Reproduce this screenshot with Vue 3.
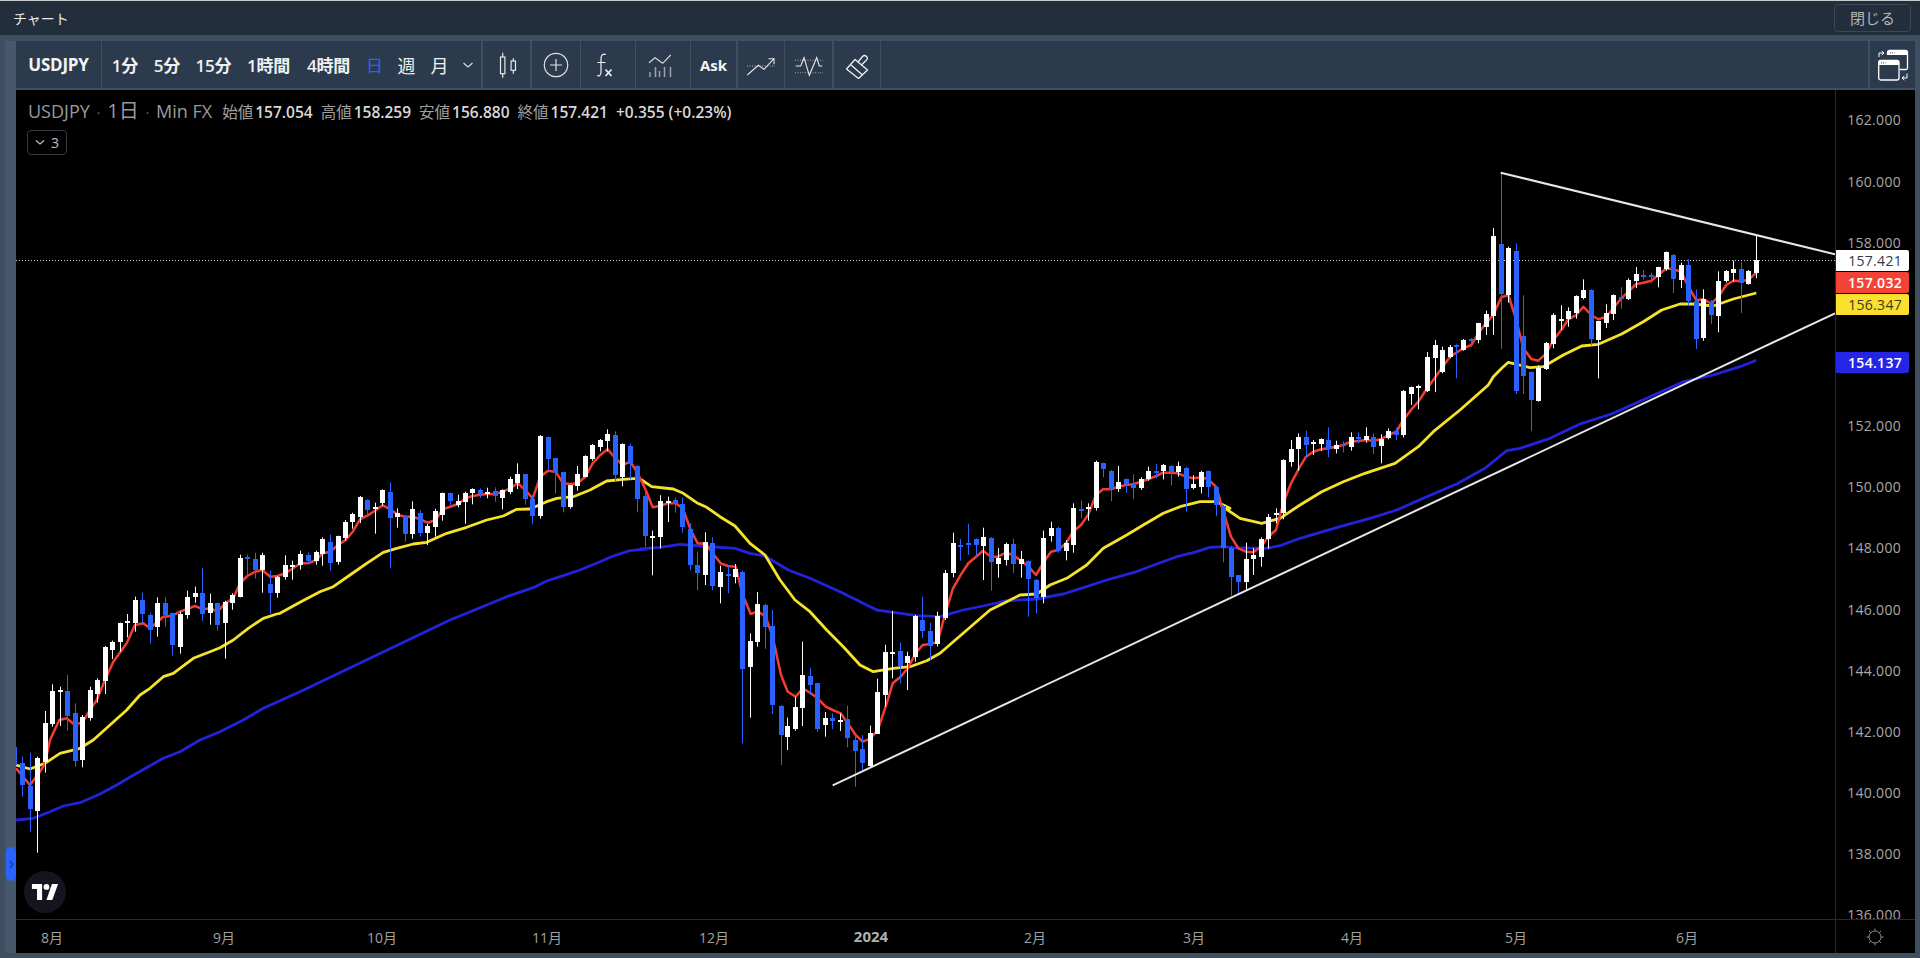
<script setup>
const sections = [
  [0, 720, '44 80 135 80 150 d;67 128 195 110 230 d;91 197 267 98 335 d;112 113 272 110 398 u'],
  [0, 540, '136 548 665 513 698 u;157 452 552 433 560 u;180 449 455 440 558 u;202 452 527 405 572 d;226 519 662 490 680 d;247 531 660 525 682 u;271 449 534 440 542 u;292 419 461 415 488 u;316 320 422 318 462 u;337 305 329 302 357 u;361 250 306 248 335 u;382 244 250 222 292 u;406 179 248 170 275 u;427 180 223 158 248 d;451 224 269 218 311 d;472 188 260 172 290 u;496 188 224 172 260 d;517 218 314 218 347 d;541 221 320 215 341 u;562 170 224 152 236 u;586 158 170 140 188 u;607 158 223 83 242 d;631 188 218 161 254 u;652 188 254 188 272 d;676 185 250 182 356 u;697 164 188 160 209 u;721 53 170 44 172 u;742 50 58 44 112 d;766 58 91 38 116 d;787 44 91 38 158 u;811 131 158 92 221 d;832 110 158 108 173 u;856 74 110 46 119 u;877 76 80 62 119 u'],
  [280, 420, '62 401 434 392 449 u;85 404 423 398 430 d;108 395 422 392 434 u;128 356 401 352 437 u;151 365 428 344 452 d;174 349 425 347 434 u;197 305 355 300 362 u;218 283 307 278 326 u;241 232 292 228 309 u;262 241 269 238 285 d;285 260 268 248 341 u;308 211 248 208 257 u;331 217 295 187 445 d;352 280 292 265 323 u;377 289 341 286 365 d;398 266 341 244 356 u;421 280 338 271 350 d;443 317 338 312 375 u;467 274 322 266 350 u;488 218 284 218 302 u;511 218 244 218 256 d;534 244 254 224 262 u;557 218 247 215 311 u;578 206 220 205 253 u;601 211 221 205 234 d;623 215 223 203 235 u;646 214 229 202 245 d;668 211 233 208 268 u;691 178 217 170 223 u;713 163 190 130 207 u;736 163 238 163 254 d;758 238 289 226 313 d;781 47 287 45 296 u;804 52 118 50 148 d;827 115 160 115 221 d;849 157 262 155 277 d;872 196 260 196 266 u;893 163 199 138 212 u;916 109 170 106 172 u;938 76 118 72 122 u;961 61 82 57 94 u;983 43 64 28 94 u;1006 46 165 34 183 d;1028 73 172 70 199 u;1051 79 133 70 178 d;1073 137 238 135 277 d;1097 227 348 203 380 d;1118 349 355 332 466 u'],
  [640, 420, '62 242 352 226 385 u;84 242 246 230 306 u;107 240 252 232 278 d;128 251 322 233 338 d;152 326 436 310 451 d;173 434 460 395 511 d;197 365 464 337 495 u;218 369 497 352 511 d;242 455 502 437 550 u;264 461 465 438 520 d;287 447 470 432 490 u;308 455 746 452 970 d;332 662 740 640 893 u;353 551 665 516 680 u;377 554 620 551 686 d;398 617 855 570 882 d;423 857 944 855 1035 d;443 917 950 893 990 u;467 860 926 830 932 u;488 765 863 665 918 u;512 768 795 743 824 d;533 789 926 789 935 d;557 893 914 876 950 u;578 894 902 880 927 d;602 899 905 880 933 u;623 897 953 857 982 d;647 960 992 945 1100 d;668 987 1028 945 1050 d;692 938 1038 917 1042 u;713 815 941 776 942 u;737 695 824 674 860 u;758 697 702 573 775 u;782 692 737 668 790 d;803 708 730 695 810 u;827 589 710 585 725 u;848 599 632 530 654 d;872 633 677 608 720 d;893 587 672 575 680 u'],
  [900, 440, '136 399 534 390 540 u;159 308 400 278 412 u;182 314 317 297 362 d;205 309 316 251 344 d;228 298 316 295 345 d;249 290 319 263 420 u;273 293 367 291 452 d;294 353 373 324 413 u;318 313 361 308 376 u;339 311 373 296 399 d;363 358 373 333 413 u;384 363 418 361 530 d;408 419 473 417 520 d;429 293 472 272 490 u;453 264 287 245 305 u;474 263 332 260 338 d;498 308 333 300 361 u;519 203 316 190 338 u;543 208 214 182 235 d;564 200 204 190 242 u;588 67 203 62 212 u;609 68 87 68 112 d;633 92 149 90 184 d;654 125 148 78 156 u;678 116 131 115 158 d;699 129 144 103 177 d;723 116 145 112 150 u;744 92 118 80 122 u;768 93 97 72 115 d;789 76 94 72 118 u;813 77 96 76 136 d;834 77 95 65 110 u;858 83 148 80 215 d;879 131 143 106 148 u;903 95 142 92 160 u;924 92 140 92 172 d;948 140 196 138 228 d;969 198 324 195 367 d;993 323 412 318 467 d;1015 405 425 405 465 d;1038 356 425 308 452 u;1060 344 358 324 405 u;1083 296 352 292 380 u;1105 230 298 222 326 u;1128 218 224 205 250 u;1150 61 220 58 238 u;1173 26 66 0 80 u'],
  [1200, 380, '295 172 207 160 272 u;318 172 195 152 232 d;340 186 190 180 225 u;363 176 192 175 213 u;385 179 207 142 232 d;408 194 208 182 220 u;430 192 198 184 217 d;453 170 202 157 212 u;475 170 176 157 190 d;498 167 180 142 188 u;520 170 200 160 222 d;543 177 198 163 250 u;565 152 174 145 178 u;589 154 165 143 180 d;610 34 164 30 172 u;633 22 42 20 75 u;655 19 24 14 88 u'],
  [1400, 340, '83 51 153 36 156 u;105 15 54 0 156 u;128 30 96 20 100 u'],
  [1450, 160, '0 560 590 555 595 u;18 555 560 553 655 d;40 540 570 537 572 u;64 537 541 535 560 d;85 490 540 488 550 u;108 463 502 452 525 u'],
  [1480, 220, '40 48 288 24 345 u;64 72 222 -142 386 d;85 84 225 80 248 u;109 93 513 70 522 d;130 349 467 226 522 d;154 457 540 455 633 d;175 443 544 436 545 u;199 370 447 366 450 u;220 286 372 280 385 u;244 298 302 256 330 u;265 274 297 262 320 u;289 229 280 226 296 u;310 210 235 178 238 u;334 211 357 208 376 d;355 304 360 304 475 u;379 280 310 253 324 u;400 226 282 223 300 u;424 230 234 202 266 d;445 179 237 175 240 u;469 163 183 141 204 u;490 166 170 150 179 d;514 166 171 158 190 d;535 142 170 140 202 u;559 97 148 95 152 u;580 105 176 102 219 d;604 136 180 128 204 u;625 136 243 118 256 d;649 244 357 208 387 d;670 236 355 208 362 u;694 247 285 240 312 d;715 184 288 154 337 u;739 154 184 150 188 u;760 148 158 122 185 u;784 148 189 126 279 d;805 153 191 150 194 u;829 121 159 46 175 u']
]

const candles = sections.flatMap(([ox, oy, text]) =>
  text.split(';').map((row) => {
    const p = row.split(' ')
    const [zx, top, bot, hi, lo] = p.slice(0, 5).map(Number)
    const cx = Math.floor(ox + zx / 3)
    const bodyTop = Math.round(oy + top / 3)
    const bodyBot = Math.round(oy + bot / 3)
    return {
      color: p[5] === 'u' ? '#ffffff' : '#2962ff',
      wx: cx,
      wy: oy + hi / 3,
      wh: (lo - hi) / 3,
      bx: cx - 2,
      by: bodyTop,
      bh: Math.max(2, bodyBot - bodyTop)
    }
  })
)

function track(groups) {
  return groups
    .flatMap(([ox, oy, text]) =>
      text.split(' ').map((pair) => {
        const [x, y] = pair.split(',').map(Number)
        return `${(ox + x / 3).toFixed(1)},${(oy + y / 3).toFixed(1)}`
      })
    )
    .join(' ')
}

const redLine = track([
  [0, 720, '48,145 90,195 120,155 135,130'],
  [0, 540, '150,600 178,540 200,535 222,553 247,548 270,510 290,480 315,420 340,365 380,310 405,255 430,250 450,265 490,230 515,228 540,215 585,198 610,208 632,205 652,215 676,190 700,175 720,130 742,108 766,95 787,90 811,110 832,108'],
  [280, 420, '16,460 39,445 62,430 85,430 108,420 128,400 151,395 174,375 197,360 218,335 241,297 262,287 285,272 308,256 331,268 354,285 377,290 398,290 421,298 443,308 467,300 488,268 511,260 534,252 557,235 578,228 601,224 623,222 646,222 668,215 691,205 713,190 736,210 758,235 781,170 804,152 827,155 849,190 872,192 893,190 916,170 938,130 961,105 983,88 1006,115 1028,135 1051,125 1073,160'],
  [640, 420, '17,210 38,262 62,257 84,250 107,250 128,265 152,330 173,370 197,372 218,400 242,430 264,438 287,440 308,525 332,582 353,574 377,590 398,650 423,765 443,815 467,830 488,805 512,820 533,835 557,860 578,870 602,880 623,910 647,945 668,965 692,955 713,930 737,860 758,790 782,770 803,745 827,700 848,675 872,672 893,665'],
  [900, 440, '136,520 159,445 182,405 205,370 228,350 249,332 273,350 294,350 318,338 339,345 363,362 384,378 408,405 429,370 453,335 474,330 498,310 519,275 543,255 564,225 588,165 609,148 633,148 654,140 678,135 699,133 723,125 744,118 768,108 789,98 813,98 834,100 858,110 879,115 903,112 924,118 948,140 969,210 993,290 1015,325 1038,335 1060,337 1083,320 1105,290 1128,270 1150,190 1173,130 1200,80'],
  [1200, 380, '318,230 340,215 363,208 385,205 408,200 430,195 453,185 475,183 498,180 520,182 543,178 565,165 589,155 610,120 633,90 655,65 678,30 700,0'],
  [1450, 160, '0,590 40,565 64,555 85,520 108,490 130,465 154,412 175,405 199,480 220,565 244,597 265,602 289,580 310,540 334,510 355,478 379,465 400,440 424,465 445,478 469,470 490,445 514,415 535,395 559,372 580,368 604,362 625,345 649,325 670,328 694,335 715,380 739,420 760,418 784,430 805,410 829,375 850,362 874,363 895,360 919,338']
])

const yellowLine = track([
  [0, 720, '48,135 90,147 135,130 180,100 240,85'],
  [0, 540, '280,600 330,555 380,510 420,465 450,445 490,410 520,400 580,355 630,335 660,323 700,300 745,265 790,235 830,222'],
  [280, 420, '0,580 60,547 120,515 160,500 210,465 260,430 310,397 350,385 400,372 440,367 500,340 560,322 620,300 670,288 710,268 750,267 800,245 830,235 880,230 930,210 980,183 1030,178 1070,175'],
  [640, 420, '5,180 35,200 100,207 130,220 170,248 200,262 240,290 285,318 330,370 375,405 420,480 465,540 510,575 560,630 610,680 660,735 700,755 760,745 810,740 860,722 900,700'],
  [900, 440, '270,510 320,485 360,465 410,462 450,435 500,415 560,375 610,325 680,285 730,255 790,220 840,200 900,185 950,185 990,205'],
  [1200, 380, '65,378 120,415 185,430 240,415 300,375 365,335 430,305 495,280 585,250 655,200 700,155 780,90'],
  [1480, 220, '25,495 40,470 65,445 85,427 110,433 150,443 190,440 250,405 305,378 355,373 425,342 490,305 545,270 600,252 640,252 700,258 760,237 829,219']
])

const blueLine = track([
  [0, 720, '48,300 100,295 150,275 190,258 240,248 300,222 350,195 410,160 490,115 540,95 600,60 660,35 730,0'],
  [0, 540, '790,505 900,455'],
  [280, 420, '510,600 560,580 620,555 680,530 760,503 800,483 850,467 900,450 960,425 1000,408 1050,392 1100,387'],
  [640, 420, '0,387 60,382 120,373 180,378 285,385 330,400 375,408 445,450 510,475 600,515 650,540 710,570 760,577 830,587 900,590'],
  [900, 440, '190,510 250,498 320,482 410,477 490,462 560,440 620,420 700,398 770,372 830,350 880,338 930,322 970,320'],
  [1200, 380, '100,503 200,505 240,497 300,475 420,440 510,415 590,390 680,350 770,312 855,265 920,212 960,205'],
  [1480, 220, '210,655 300,612 400,580 510,530 610,485 700,465 780,440 829,421']
])

const timeframes = [
  { label: '1分', w: 42 },
  { label: '5分', w: 42 },
  { label: '15分', w: 51 },
  { label: '1時間', w: 59 },
  { label: '4時間', w: 61 },
  { label: '日', w: 31, active: true },
  { label: '週', w: 33 },
  { label: '月', w: 33 }
]

const ohlc = [
  ['始値', '157.054'],
  ['高値', '158.259'],
  ['安値', '156.880'],
  ['終値', '157.421']
]

const prices = ['162.000', '160.000', '158.000', '156.000', '154.000', '152.000', '150.000', '148.000', '146.000', '144.000', '142.000', '140.000', '138.000', '136.000']
const hiddenPrices = ['156.000', '154.000']

const tags = [
  { text: '157.421', top: 160, cls: 'tag-white' },
  { text: '157.032', top: 182, cls: 'tag-red' },
  { text: '156.347', top: 204, cls: 'tag-yellow' },
  { text: '154.137', top: 262, cls: 'tag-blue' }
]

const months = [
  ['8月', 36], ['9月', 208], ['10月', 366], ['11月', 531], ['12月', 698],
  ['2024', 855, true], ['2月', 1019], ['3月', 1178], ['4月', 1336], ['5月', 1500], ['6月', 1671]
]
</script>

<template>
  <div class="page">
    <header class="titlebar">
      <span class="title">チャート</span>
      <button class="close">閉じる</button>
    </header>
    <div class="frame">
      <div class="rail"></div>
      <div class="workspace">
        <nav class="toolbar">
          <div class="tool symbol">USDJPY</div>
          <div class="tool frames">
            <span
              v-for="tf in timeframes"
              :key="tf.label"
              class="tf"
              :class="{ active: tf.active }"
              :style="{ width: tf.w + 'px' }"
            >{{ tf.label }}</span>
            <svg class="chev" width="12" height="8" viewBox="0 0 12 8"><path d="M1.5 2l4.5 4 4.5-4" fill="none" stroke="#d8dde3" stroke-width="1.2" /></svg>
          </div>
          <div class="tool thick w48">
            <svg width="28" height="28" viewBox="0 0 28 28" fill="none" stroke="#e8e8e8" stroke-width="1.2">
              <path d="M9.7 1.7V6M9.7 22.7V26.7M20.3 7.3V10M20.3 19.3V22.7" />
              <rect x="7.5" y="6" width="4.4" height="16.7" />
              <rect x="18.1" y="10" width="4.4" height="9.3" />
            </svg>
          </div>
          <div class="tool w49">
            <svg width="28" height="28" viewBox="0 0 28 28" fill="none" stroke="#e0e0e0" stroke-width="1.2">
              <circle cx="14" cy="14" r="11.7" />
              <path d="M14 8v12M8 14h12" />
            </svg>
          </div>
          <div class="tool w55">
            <svg width="28" height="28" viewBox="0 0 28 28" fill="none" stroke="#f0f0f0" stroke-width="1.2">
              <path d="M12 3.500C9 2.500 7 4 7 7.500V21C7 24.500 5 25.500 3 24.500M3.500 11.500H11.500" />
              <path d="M11.500 18.500L17.500 25M17.500 18.500L11.500 25" stroke-width="1.700" />
            </svg>
          </div>
          <div class="tool w55 indic">
            <svg width="28" height="28" viewBox="0 0 28 28" fill="none" stroke="#d8d8d8" stroke-width="1.2">
              <path d="M3 11.700L9 6.700L16.700 12.300L24.700 4" />
              <path d="M4 21v5M9.500 16v10M13.500 20v6M18.500 16v10M24.500 16v10" stroke="#9aa3ad" stroke-width="1.500" />
            </svg>
          </div>
          <div class="tool thick w47 ask">Ask</div>
          <div class="tool w47">
            <svg width="28" height="28" viewBox="0 0 28 28" fill="none" stroke="#e8e8e8" stroke-width="1.1">
              <path d="M0 15H28" stroke-dasharray="1 1.500" stroke="#b8b8b8" />
              <path d="M.3 24L11.300 14.300L17 18.300L27 7.700" />
              <path d="M21.500 7.700H27V13.300" />
            </svg>
          </div>
          <div class="tool thick w48">
            <svg width="28" height="28" viewBox="0 0 28 28" fill="none" stroke="#e8e8e8" stroke-width="1.1">
              <path d="M0 9.300H28M0 21.700H28" stroke-dasharray="1 1.500" stroke="#a8a8a8" />
              <path d="M.7 15H5.700L9 6.700L14.300 24.300L21.700 6.700L24.300 15H27.300" />
            </svg>
          </div>
          <div class="tool w47">
            <svg width="28" height="28" viewBox="0 0 28 28" fill="none" stroke="#f0f0f0" stroke-width="1.300" stroke-linejoin="round">
              <path d="M3.500 18L12 8.500L24.500 19L15.500 27.500Z" />
              <path d="M8 14L19.500 24" />
              <path d="M15 11L19.500 5.500Q21.500 3.500 23.500 5.500T23 9.500L18.500 14" />
            </svg>
          </div>
          <div class="spacer"></div>
          <div class="tool windows">
            <svg width="34" height="34" viewBox="0 0 34 34" fill="none" stroke="#ffffff" stroke-width="1.300">
              <path d="M11.500 7V4.500Q11.500 2.500 13.500 2.500H29.500Q31.500 2.500 31.500 4.500V20Q31.500 21.500 30 21.500H24" />
              <path d="M11.500 3H31.500V7H11.500Z" fill="#fff" stroke="none" />
              <rect x="2.700" y="12.500" width="20.300" height="19.500" rx="2" fill="#2b3b4d" />
              <path d="M2.700 13H23V17H2.700Z" fill="#fff" stroke="none" />
              <path d="M3 9V5H7.500M5.700 3L8 5L5.700 7" stroke-width="1" />
              <path d="M31 25.500V30H26.500M28.300 32L26 30L28.300 28" stroke-width="1" />
              <path d="M14 4.900h4.500M5 14.900h4.500" stroke="#2b3b4d" stroke-width="1" stroke-dasharray="1 1" />
            </svg>
          </div>
        </nav>

        <section class="chart-row">
          <div class="canvas">
            <svg class="plot" width="1819" height="829" viewBox="16 90 1819 829">
              <polyline :points="blueLine" fill="none" stroke="#2323dc" stroke-width="2.800" stroke-linejoin="round" />
              <polyline :points="yellowLine" fill="none" stroke="#f7e22a" stroke-width="2.800" stroke-linejoin="round" />
              <polyline :points="redLine" fill="none" stroke="#f23d30" stroke-width="2.500" stroke-linejoin="round" />
              <line x1="16" y1="260.500" x2="1835" y2="260.500" stroke="#d8d8d8" stroke-width="1" stroke-dasharray="1 2" />
              <g v-for="(c, i) in candles" :key="i">
                <rect :x="c.wx" :y="c.wy" width="1" :height="c.wh" :fill="c.color" />
                <rect :x="c.bx" :y="c.by" width="5" :height="c.bh" :fill="c.color" />
              </g>
              <line x1="1500.700" y1="172.700" x2="1835" y2="254.300" stroke="#e6e6e6" stroke-width="2" />
              <line x1="832.700" y1="785.300" x2="1835" y2="313.300" stroke="#e6e6e6" stroke-width="2" />
            </svg>

            <div class="legend">
              <span class="sym">USDJPY</span>
              <span class="dot">·</span>
              <span class="sym tfval">1日</span>
              <span class="dot">·</span>
              <span class="sym feed">Min FX</span>
              <span v-for="o in ohlc" :key="o[0]" class="pair"><span class="lab">{{ o[0] }}</span><span class="val">{{ o[1] }}</span></span>
              <span class="val delta">+0.355 (+0.23%)</span>
            </div>
            <div class="collapse-ind">
              <svg width="10" height="8" viewBox="0 0 10 8"><path d="M1 1.500l4 3.500 4-3.500" fill="none" stroke="#c8c8c8" stroke-width="1.100" /></svg>
              <span>3</span>
            </div>
            <div class="side-handle">
              <svg width="5" height="9" viewBox="0 0 5 9"><path d="M1 1l3 3.500-3 3.500" fill="none" stroke="#173a8c" stroke-width="1.200" /></svg>
            </div>
            <div class="tv-logo">
              <svg width="28" height="16" viewBox="0 0 36 22" fill="#fff">
                <path d="M14 22H7V7H0V0H14Z" />
                <circle cx="20" cy="4" r="4" />
                <path d="M28 22H20L27.500 0H36Z" />
              </svg>
            </div>
          </div>

          <aside class="axis">
            <div class="ticks">
              <div
                v-for="p in prices"
                :key="p"
                class="tick"
                :class="{ ghost: hiddenPrices.includes(p) }"
              >{{ p }}</div>
            </div>
            <div
              v-for="t in tags"
              :key="t.text"
              class="tag"
              :class="t.cls"
              :style="{ top: t.top + 'px' }"
            >{{ t.text }}</div>
          </aside>
        </section>

        <footer class="timebar">
          <div class="months">
            <span
              v-for="m in months"
              :key="m[0]"
              class="month"
              :class="{ year: m[2] }"
              :style="{ left: m[1] + 'px' }"
            >{{ m[0] }}</span>
          </div>
          <div class="corner">
            <svg width="20" height="20" viewBox="0 0 20 20" fill="none" stroke="#8a8a8a" stroke-width="1">
              <circle cx="10" cy="10" r="6" />
              <path d="M10 1.500V4M10 16V18.500M1.500 10H4M16 10H18.500M4 4L5.700 5.700M14.300 14.300L16 16M16 4L14.300 5.700M5.700 14.300L4 16" />
            </svg>
          </div>
        </footer>
      </div>
    </div>
  </div>
</template>

<style>
html, body { margin: 0; background: #000; overflow: hidden; }
</style>

<style scoped>
.page {
  width: 1920px;
  height: 958px;
  display: flex;
  flex-direction: column;
  overflow: hidden;
  font-family: "Open Sans", "Noto Sans CJK JP", sans-serif;
  color: #fff;
  background: #3f4f60;
}
.titlebar {
  box-sizing: border-box;
  height: 35px;
  flex: none;
  background: #232e3d;
  border-top: 1px solid #c8ccd0;
  display: flex;
  align-items: center;
  justify-content: space-between;
  padding: 0 9px 1px 13px;
}
.title { font-size: 14px; color: #e8e8e8; }
.close {
  box-sizing: border-box;
  width: 77px;
  height: 28px;
  background: transparent;
  border: 1px solid #3a4757;
  border-radius: 4px;
  color: #b4b4b4;
  font: 15px "Noto Sans CJK JP", sans-serif;
  padding: 0;
}
.frame {
  flex: 1;
  min-height: 0;
  display: flex;
  padding: 6px 5px 5px 5px;
  background: #3f4f60;
}
.rail { width: 11px; flex: none; background: #47586c; }
.workspace { flex: 1; min-width: 0; display: flex; flex-direction: column; }
.toolbar {
  box-sizing: border-box;
  height: 49px;
  flex: none;
  display: flex;
  background: #2b3b4d;
  border-bottom: 2px solid #3f4f60;
}
.tool {
  box-sizing: border-box;
  display: flex;
  align-items: center;
  justify-content: center;
  border-right: 1px solid #3f4f60;
  flex: none;
}
.tool.thick { border-right-width: 2px; }
.symbol { width: 86px; font-size: 17px; font-weight: 700; color: #f4f4f4; letter-spacing: -.2px; }
.frames { width: 381px; justify-content: flex-start; padding-left: 2px; border-right-width: 2px; }
.tf {
  font-size: 17px;
  font-weight: 600;
  letter-spacing: -.2px;
  color: #f0f0f0;
  text-align: center;
  flex: none;
}
.tf:nth-child(n+7) { font-weight: 400; font-size: 18px; }
.tf.active { font-weight: 400; font-size: 17px; color: #2962ff; }
.chev { margin-left: 6px; }
.w47 { width: 47px; }
.w48 { width: 49px; }
.w49 { width: 49px; }
.w55 { width: 55px; }
.indic svg { margin-left: -6px; }
.ask { font-size: 15px; font-weight: 700; color: #f4f4f4; }
.spacer { flex: 1; }
.windows { width: 47px; border-left: 2px solid #3f4f60; border-right: 0; }
.chart-row { flex: 1; min-height: 0; display: flex; background: #000; }
.canvas {
  position: relative;
  width: 1819px;
  flex: none;
}
.plot { display: block; }
.legend {
  position: absolute;
  left: 12px;
  top: 9px;
  display: flex;
  align-items: baseline;
  white-space: nowrap;
  line-height: 24px;
}
.sym { font-size: 18px; color: #9a9a9a; }
.tfval { font-size: 20px; }
.feed { margin-right: 10px; }
.dot { color: #777; margin: 0 7px; font-size: 13px; }
.pair { margin-right: 8px; display: inline-flex; align-items: baseline; }
.lab { font-size: 15.500px; color: #a0a0a0; margin-right: 2px; }
.val { font-size: 15.500px; font-weight: 600; color: #d8d8d8; }
.delta { font-weight: 600; }
.collapse-ind {
  position: absolute;
  left: 11px;
  top: 40px;
  box-sizing: border-box;
  width: 40px;
  height: 25px;
  border: 1px solid #363a45;
  border-radius: 4px;
  display: flex;
  align-items: center;
  justify-content: center;
  gap: 6px;
  font-size: 14px;
  color: #c0c0c0;
}
.side-handle {
  position: absolute;
  left: -10px;
  top: 757px;
  width: 10px;
  height: 34px;
  background: #2962ff;
  border-radius: 5px;
  display: flex;
  align-items: center;
  justify-content: center;
}
.tv-logo {
  position: absolute;
  left: 8px;
  top: 781px;
  width: 42px;
  height: 42px;
  border-radius: 50%;
  background: #15151f;
  display: flex;
  align-items: center;
  justify-content: center;
}
.axis {
  position: relative;
  flex: 1;
  height: 829px;
  overflow: hidden;
  border-left: 1px solid #2a2a2a;
  box-sizing: border-box;
}
.ticks { margin-top: -.6px; }
.tick {
  height: 61.150px;
  display: flex;
  align-items: center;
  justify-content: flex-end;
  padding-right: 14px;
  font-size: 14px;
  letter-spacing: .3px;
  color: #a8a8a8;
}
.tick.ghost { visibility: hidden; }
.tag {
  position: absolute;
  left: 0;
  width: 73px;
  height: 21px;
  border-radius: 0 2px 2px 0;
  font-size: 14px;
  letter-spacing: .3px;
  line-height: 21px;
  text-align: right;
  padding-right: 7px;
  box-sizing: border-box;
}
.tag-white { background: #fff; color: #333a45; }
.tag-red { background: #f44336; color: #fff; font-weight: 600; }
.tag-yellow { background: #fbe02d; color: #3a3a2a; }
.tag-blue { background: #2525e8; color: #fff; font-weight: 600; }
.timebar {
  box-sizing: border-box;
  height: 34px;
  flex: none;
  display: flex;
  background: #000;
  border-top: 1px solid #2a2a2a;
}
.months { position: relative; width: 1819px; flex: none; }
.month {
  position: absolute;
  top: 7px;
  transform: translateX(-50%);
  font-size: 14px;
  color: #a0a0a0;
}
.month.year { font-size: 15px; font-weight: 700; color: #b0b0b0; top: 6px; }
.corner {
  flex: 1;
  border-left: 1px solid #2a2a2a;
  display: flex;
  align-items: center;
  justify-content: center;
  padding-right: 1px;
}
</style>
